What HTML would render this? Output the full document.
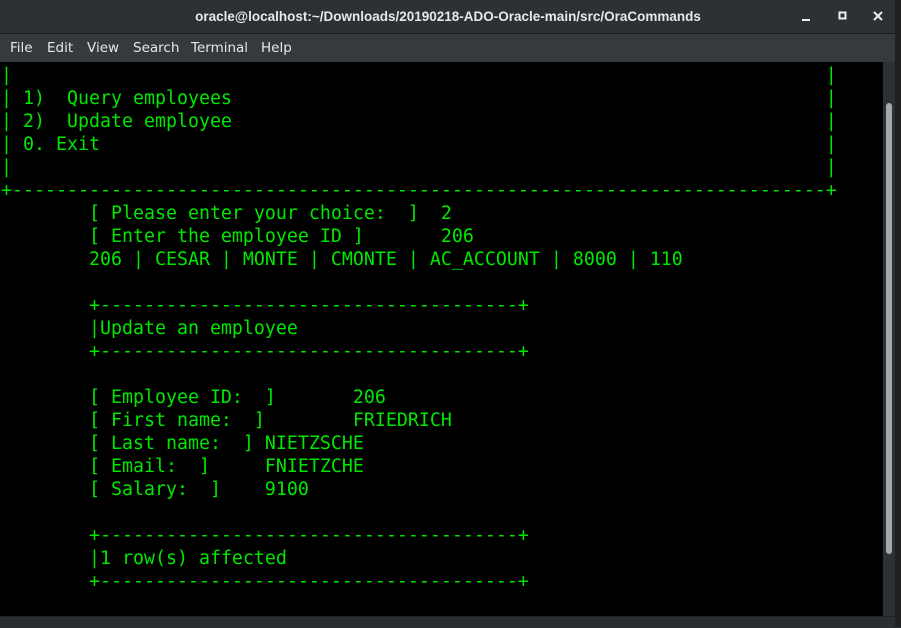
<!DOCTYPE html>
<html><head><style>
html,body{margin:0;padding:0;width:901px;height:627px;overflow:hidden;background:#2b2e30;}
.title{position:absolute;left:0;top:0;width:896px;height:33px;background:#2d3133;border-bottom:1px solid #1c1e1f;color:#e8e8e8;font:bold 13.5px "Liberation Sans","DejaVu Sans",sans-serif;text-align:center;line-height:33px;}
.menu{position:absolute;left:0;top:34px;width:896px;height:28px;background:#353b3d;color:#e6e6e6;font:13.5px "DejaVu Sans","Liberation Sans",sans-serif;line-height:28px;}
.menu span{position:absolute;top:0;}
.term{position:absolute;left:0;top:62px;width:883px;height:554px;background:#000;}
pre{margin:0;position:absolute;left:1px;top:2px;font-family:"DejaVu Sans Mono","Liberation Mono",monospace;font-size:18.27px;line-height:23px;color:#00e800;}
.sb{position:absolute;left:883px;top:62px;width:12px;height:554px;background:#2c3133;}
.thumb{position:absolute;left:886px;top:103px;width:6px;height:451px;background:#a5a7a8;border-radius:3px;}
.bot{position:absolute;left:0;top:616px;width:896px;height:11px;background:#2b2e30;border-top:1px solid #1f2122;}
.edge{position:absolute;left:895px;top:0;width:6px;height:627px;background:#1e2021;}
</style></head><body>
<div class="title">oracle@localhost:~/Downloads/20190218-ADO-Oracle-main/src/OraCommands
<svg style="position:absolute;left:800px;top:10px" width="14" height="14"><rect x="2" y="9" width="8" height="2" fill="#eee"/></svg>
<svg style="position:absolute;left:837px;top:10px" width="14" height="14"><rect x="2.5" y="2.5" width="6" height="6" fill="none" stroke="#eee" stroke-width="2"/></svg>
<svg style="position:absolute;left:872px;top:10px" width="14" height="14"><path d="M2 2L10 10M10 2L2 10" stroke="#eee" stroke-width="2"/></svg>
</div>
<div class="menu"><span style="left:10px">File</span><span style="left:47px">Edit</span><span style="left:87px">View</span><span style="left:133px">Search</span><span style="left:191px">Terminal</span><span style="left:261px">Help</span></div>
<div class="term"><pre>|                                                                          |
| 1)  Query employees                                                      |
| 2)  Update employee                                                      |
| 0. Exit                                                                  |
|                                                                          |
+--------------------------------------------------------------------------+
        [ Please enter your choice:  ]  2
        [ Enter the employee ID ]       206
        206 | CESAR | MONTE | CMONTE | AC_ACCOUNT | 8000 | 110

        +--------------------------------------+
        |Update an employee
        +--------------------------------------+

        [ Employee ID:  ]       206
        [ First name:  ]        FRIEDRICH
        [ Last name:  ] NIETZSCHE
        [ Email:  ]     FNIETZCHE
        [ Salary:  ]    9100

        +--------------------------------------+
        |1 row(s) affected
        +--------------------------------------+</pre></div>
<div class="sb"></div><div class="thumb"></div>
<div class="bot"></div><div class="edge"></div>
</body></html>
